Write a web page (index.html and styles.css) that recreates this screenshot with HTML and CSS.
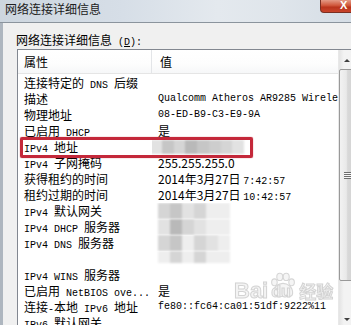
FILE: index.html
```html
<!DOCTYPE html>
<html lang="zh-CN">
<head>
<meta charset="utf-8">
<title>网络连接详细信息</title>
<link rel="stylesheet" href="styles.css">
</head>
<body>
<div class="window">
  <div class="titlebar">
    <span class="title">网络连接详细信息</span>
    <div class="close"><span>X</span></div>
  </div>
  <div class="dialog">
    <div class="label">网络连接详细信息<span class="m"> (<u>D</u>):</span></div>
    <div class="listbox">
      <div class="list">
        <div class="header">
          <div class="hc c1">属性</div>
          <div class="hc c2">值</div>
        </div>
        <div class="rows">
          <div class="row"><div class="c1">连接特定的<span class="m"> DNS </span>后缀</div><div class="c2"></div></div>
          <div class="row"><div class="c1">描述</div><div class="c2 m">Qualcomm Atheros AR9285 Wireless Network Adapter</div></div>
          <div class="row"><div class="c1">物理地址</div><div class="c2 m">08-ED-B9-C3-E9-9A</div></div>
          <div class="row"><div class="c1">已启用<span class="m"> DHCP</span></div><div class="c2">是</div></div>
          <div class="row"><div class="c1"><span class="m">IPv4 </span>地址</div><div class="c2"><div class="mosaic ip"><i class="g1"></i><i class="g2"></i><i class="g3"></i><i class="g4"></i><i class="g2"></i><i class="g5"></i><i class="g3"></i><i class="g1"></i></div></div></div>
          <div class="row"><div class="c1"><span class="m">IPv4 </span>子网掩码</div><div class="c2">255.255.255.0</div></div>
          <div class="row"><div class="c1">获得租约的时间</div><div class="c2">2014年3月27日 <span class="m">7:42:57</span></div></div>
          <div class="row"><div class="c1">租约过期的时间</div><div class="c2">2014年3月27日 <span class="m">10:42:57</span></div></div>
          <div class="row"><div class="c1"><span class="m">IPv4 </span>默认网关</div><div class="c2"><div class="mosaic"><i class="g3"></i><i class="g2"></i><i class="g1"></i><i class="g3"></i><i class="g6"></i><i class="g6"></i></div></div></div>
          <div class="row"><div class="c1"><span class="m">IPv4 DHCP </span>服务器</div><div class="c2"><div class="mosaic"><i class="g1"></i><i class="g4"></i><i class="g3"></i><i class="g1"></i><i class="g6"></i><i class="g6"></i></div></div></div>
          <div class="row"><div class="c1"><span class="m">IPv4 DNS </span>服务器</div><div class="c2"><div class="mosaic"><i class="g3"></i><i class="g2"></i><i class="g6"></i><i class="g3"></i><i class="g1"></i><i class="g6"></i></div></div></div>
          <div class="row"><div class="c1"></div><div class="c2"><div class="mosaic short"><i class="g6"></i><i class="g3"></i><i class="g6"></i><i class="g3"></i><i class="g6"></i><i class="g6"></i></div></div></div>
          <div class="row"><div class="c1"><span class="m">IPv4 WINS </span>服务器</div><div class="c2"></div></div>
          <div class="row"><div class="c1">已启用<span class="m"> NetBIOS ove...</span></div><div class="c2">是</div></div>
          <div class="row"><div class="c1">连接<span class="m">-</span>本地<span class="m"> IPv6 </span>地址</div><div class="c2 m">fe80::fc64:ca01:51df:9222%11</div></div>
          <div class="row"><div class="c1"><span class="m">IPv6 </span>默认网关</div><div class="c2"></div></div>
        </div>
        <div class="highlight"></div>
        <div class="watermark">
          <span class="wm-bai">Bai</span>
          <span class="wm-paw">
            <svg width="30" height="27" viewBox="0 0 28 24">
              <ellipse cx="6" cy="9" rx="2.6" ry="3.2" fill="#f4f4f4" stroke="#d2d2d2" stroke-width="1"/>
              <ellipse cx="11" cy="4" rx="2.8" ry="3.4" fill="#f4f4f4" stroke="#d2d2d2" stroke-width="1"/>
              <ellipse cx="17" cy="4" rx="2.8" ry="3.4" fill="#f4f4f4" stroke="#d2d2d2" stroke-width="1"/>
              <ellipse cx="22" cy="9" rx="2.6" ry="3.2" fill="#f4f4f4" stroke="#d2d2d2" stroke-width="1"/>
              <path d="M5 19 C5 13 10 10 14 10 C18 10 23 13 23 19 C23 23 19 23 14 22 C9 23 5 23 5 19 Z" fill="#f4f4f4" stroke="#d2d2d2" stroke-width="1"/>
            </svg>
            <span class="wm-du">du</span>
          </span>
          <span class="wm-jy">经验</span>
        </div>
      </div>
      <div class="scrollbar">
        <div class="sb-btn"><span class="tri up"></span></div>
        <div class="sb-thumb"><span class="grip"></span></div>
        <div class="sb-track"></div>
        <div class="sb-btn"><span class="tri down"></span></div>
      </div>
    </div>
  </div>
</div>
</body>
</html>
```

FILE: styles.css
```css
* {
  box-sizing: border-box;
  margin: 0;
  padding: 0;
}

html, body {
  width: 351px;
  height: 325px;
  overflow: hidden;
  background: #f0f0f0;
}

body {
  font-family: "Noto Sans CJK SC", sans-serif;
  font-size: 12px;
  color: #000;
}

.m {
  font-family: "Liberation Mono", "Noto Sans CJK SC", monospace;
  font-size: 10px;
}

.window {
  width: 351px;
  height: 325px;
  display: flex;
  flex-direction: column;
  overflow: hidden;
}

.titlebar {
  height: 23px;
  flex: none;
  display: flex;
  align-items: flex-start;
  background: linear-gradient(90deg, #cdd6df 0%, #d6dee7 35%, #e4e9ee 62%, #dfe5eb 80%, #d5dde5 100%);
  border-bottom: 1px solid #8b949d;
}

.title {
  padding: 1px 0 0 5px;
  line-height: 16px;
  color: #202020;
}

.close {
  margin-left: auto;
  margin-right: -14px;
  width: 45px;
  height: 13px;
  background: linear-gradient(#e49a86 0%, #d0573c 45%, #b9341c 60%, #c9452c 100%);
  border: 1px solid #7a2f22;
  border-top: none;
  border-radius: 0 0 4px 4px;
  color: #fff;
  font: bold 11px "Liberation Sans", sans-serif;
  line-height: 10px;
  padding-left: 19px;
}

.dialog {
  flex: 1;
  display: flex;
  flex-direction: column;
  padding: 9px 0 0 13px;
  border-left: 3px solid #aeb6bf;
}

.label {
  line-height: 16px;
  height: 16px;
  color: #000;
}

.label u {
  text-decoration: underline;
}

.listbox {
  margin: 1px -10px 0 1px;
  height: 279px;
  flex: none;
  display: flex;
  background: #fff;
  border-top: 1px solid #828790;
  border-left: 1px solid #828790;
}

.list {
  position: relative;
  width: 320px;
  flex: none;
  overflow: hidden;
}

.header {
  display: flex;
  height: 24px;
  border-bottom: 1px solid #e5e5e5;
  background: linear-gradient(#ffffff, #fdfdfd 60%, #f6f7f8);
}

.hc {
  line-height: 23px;
}

.c1 {
  width: 134px;
  flex: none;
  padding-left: 6px;
  white-space: nowrap;
  overflow: hidden;
}

.hc.c1 {
  border-right: 1px solid #e3e5e8;
}

.c2 {
  flex: 1;
  padding-left: 6px;
  white-space: nowrap;
  overflow: hidden;
}

.hc.c2 {
  padding-left: 8px;
}

.rows {
  padding-top: 1px;
}

.row {
  display: flex;
  height: 16px;
  line-height: 16px;
}

.mosaic {
  display: flex;
  height: 16px;
  width: 72px;
  filter: blur(1.2px);
}

.mosaic.ip {
  width: 94px;
  margin-left: -8px;
  height: 14px;
  margin-top: 1px;
}

.mosaic.short {
  height: 12px;
}

.mosaic i {
  flex: 1;
  display: block;
}

.g1 { background: #e2e2e2; }
.g2 { background: #c6c6c6; }
.g3 { background: #d5d5d5; }
.g4 { background: #b9b9b9; }
.g5 { background: #cdcdcd; }
.g6 { background: #eeeeee; }

.highlight {
  position: absolute;
  left: 2px;
  top: 87px;
  width: 233px;
  height: 21px;
  border: 3px solid #c4283a;
  border-radius: 2px;
  box-shadow: 0 0 1px #c4283a;
}

.watermark {
  position: absolute;
  left: 216px;
  top: 222px;
  display: flex;
  align-items: flex-end;
  opacity: 0.9;
}

.wm-bai,
.wm-du {
  font: bold 22px "Liberation Sans", sans-serif;
  color: #f2f2f2;
  -webkit-text-stroke: 1px #cfcfcf;
  line-height: 19px;
}

.wm-paw {
  position: relative;
  width: 30px;
  height: 28px;
  display: block;
}

.wm-paw svg {
  display: block;
}

.wm-du {
  position: absolute;
  left: 3px;
  bottom: 0;
  font-size: 16px;
  line-height: 16px;
}

.wm-jy {
  font-size: 17px;
  font-weight: bold;
  line-height: 19px;
  color: #f2f2f2;
  -webkit-text-stroke: 1px #cfcfcf;
  margin-left: 1px;
}

.scrollbar {
  width: 17px;
  flex: none;
  display: flex;
  flex-direction: column;
  background: linear-gradient(90deg, #e3e3e3, #f3f3f3 30%, #f3f3f3 70%, #e8e8e8);
  border-left: 1px solid #e8e8e8;
}

.sb-btn {
  height: 18px;
  flex: none;
  display: flex;
  align-items: center;
  justify-content: center;
}

.sb-btn:last-child {
  height: 17px;
}

.tri {
  width: 0;
  height: 0;
  border-left: 3px solid transparent;
  border-right: 3px solid transparent;
}

.tri.up {
  border-bottom: 3px solid #404040;
  margin-top: 2px;
}

.tri.down {
  border-top: 3px solid #404040;
}

.sb-thumb {
  height: 212px;
  margin-top: 1px;
  flex: none;
  border: 1px solid #999;
  border-radius: 2px;
  background: linear-gradient(90deg, #f2f2f2, #e9e9e9 45%, #d8d8d8 55%, #d4d4d4);
  display: flex;
  align-items: center;
  justify-content: center;
}

.grip {
  width: 7px;
  height: 7px;
  background: repeating-linear-gradient(#6e6e6e 0 1px, #f6f6f6 1px 2px);
}

.sb-track {
  flex: 1;
}
```
